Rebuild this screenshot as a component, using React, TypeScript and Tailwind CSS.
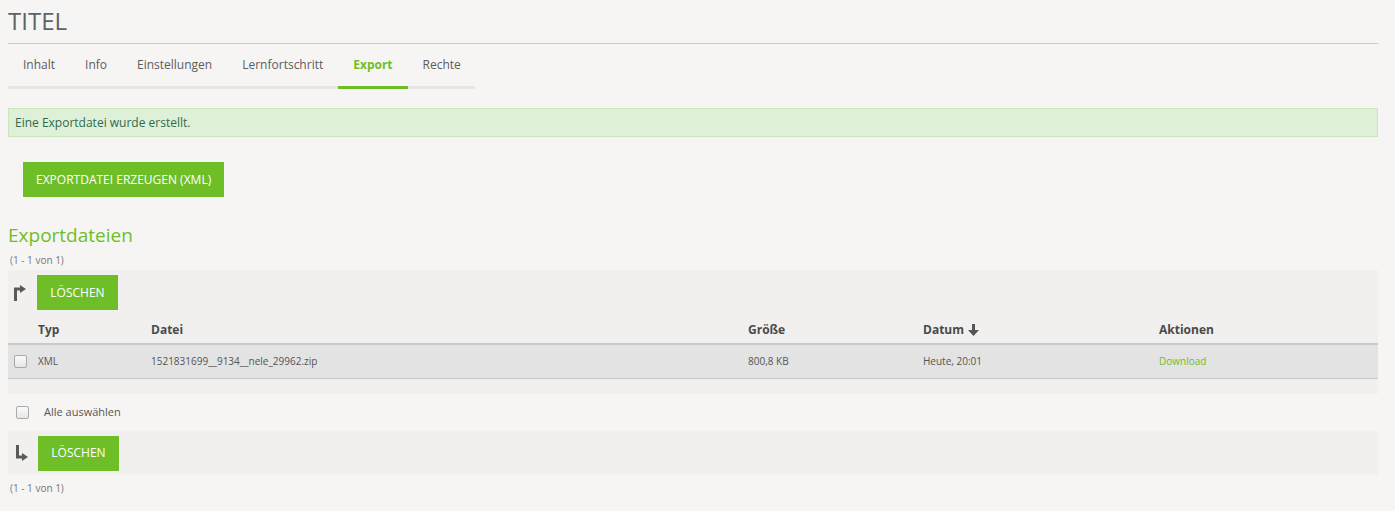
const green = 'bg-[#6ebe27]'

const ArrowUpRight = () => (
  <svg width="12" height="16" viewBox="0 0 12 16" className="shrink-0">
    <path d="M1.5 16 V4 H7" stroke="#5a5a5a" strokeWidth="3" fill="none" />
    <path d="M6 0 L12 4 L6 8 Z" fill="#5a5a5a" />
  </svg>
)

const ArrowDownRight = () => (
  <svg width="12" height="16" viewBox="0 0 12 16" className="shrink-0">
    <path d="M1.5 0 V12 H7" stroke="#5a5a5a" strokeWidth="3" fill="none" />
    <path d="M6 8 L12 12 L6 16 Z" fill="#5a5a5a" />
  </svg>
)

const Checkbox = () => (
  <span className="block w-[13px] h-[13px] rounded-[2px] border border-[#a9a9a9] bg-gradient-to-b from-[#fafafa] to-[#e6e6e6]" />
)

const tabs = ['Inhalt', 'Info', 'Einstellungen', 'Lernfortschritt', 'Export', 'Rechte']

const cols = 'grid grid-cols-[30px_113px_597px_175px_236px_1fr] items-center'

export default function App() {
  return (
    <div className="min-h-[511px] bg-[#f6f5f3] text-[#4c4c4c] pl-2 pr-[17px] pt-[7px] font-['Open_Sans',_'Liberation_Sans',_sans-serif]">
      <h1 className="text-[24px] leading-[28px] text-[#5b6369] pb-[8px] border-b border-[#c9c9c9]">TITEL</h1>

      <div className="flex w-[467px] mt-[8px] border-b-[3px] border-[#e8e5e4]">
        {tabs.map((t) => (
          <div
            key={t}
            className={
              'px-[15px] pt-[4px] pb-[12px] -mb-[3px] text-[12px] leading-[18px] ' +
              (t === 'Export'
                ? 'border-b-[3px] border-[#6ebe27] text-[#6ebe27] font-bold'
                : 'border-b-[3px] border-transparent text-[#5c5c5c]')
            }
          >
            {t}
          </div>
        ))}
      </div>

      <div className="mt-[19px] h-[29px] flex items-center px-[6px] bg-[#dff0d8] border border-[#c9e6b9] text-[12px] text-[#2f6b4c]">
        Eine Exportdatei wurde erstellt.
      </div>

      <div className="pl-[15px] mt-[25px]">
        <button className={`${green} h-[35px] px-[13px] text-white text-[12px] uppercase`}>
          Exportdatei erzeugen (XML)
        </button>
      </div>

      <h2 className="mt-[25px] text-[19px] leading-[26px] text-[#6ebe27]">Exportdateien</h2>

      <div className="mt-[6px] pl-[2px] text-[10px] leading-[12px] text-[#777]">(1 - 1 von 1)</div>

      <div className="mt-[4px] bg-[#f1f0ee] pb-[15px]">
        <div className="flex items-center gap-[11px] pl-[6px] pt-[5px]">
          <ArrowUpRight />
          <button className={`${green} h-[35px] w-[81px] text-white text-[12px]`}>LÖSCHEN</button>
        </div>

        <div className={`${cols} h-[35px] pt-[6px] border-b-2 border-[#c8c9c9] text-[12px] font-bold text-[#4a4a4a]`}>
          <span />
          <span>Typ</span>
          <span>Datei</span>
          <span>Größe</span>
          <span className="flex items-center gap-[4px]">
            Datum
            <svg width="11" height="12" viewBox="0 0 11 12">
              <path d="M5.5 0 V7" stroke="#555" strokeWidth="3" />
              <path d="M0 6 H11 L5.5 12 Z" fill="#555" />
            </svg>
          </span>
          <span>Aktionen</span>
        </div>

        <div className={`${cols} h-[34px] bg-[#e2e3e2] border-b border-[#c8c9c9] text-[10px] text-[#555]`}>
          <span className="pl-[6px]">
            <Checkbox />
          </span>
          <span>XML</span>
          <span>1521831699__9134__nele_29962.zip</span>
          <span>800,8 KB</span>
          <span>Heute, 20:01</span>
          <span className="text-[#6ebe27]">Download</span>
        </div>
      </div>

      <div className="flex items-center h-[37px] pl-[8px] text-[11px] text-[#555]">
        <Checkbox />
        <span className="ml-[15px]">Alle auswählen</span>
      </div>

      <div className="bg-[#f1f0ee] h-[44px] flex items-center gap-[10px] pl-[8px]">
        <ArrowDownRight />
        <button className={`${green} h-[35px] w-[81px] text-white text-[12px]`}>LÖSCHEN</button>
      </div>

      <div className="mt-[7px] pl-[2px] text-[10px] leading-[12px] text-[#777]">(1 - 1 von 1)</div>
    </div>
  )
}
